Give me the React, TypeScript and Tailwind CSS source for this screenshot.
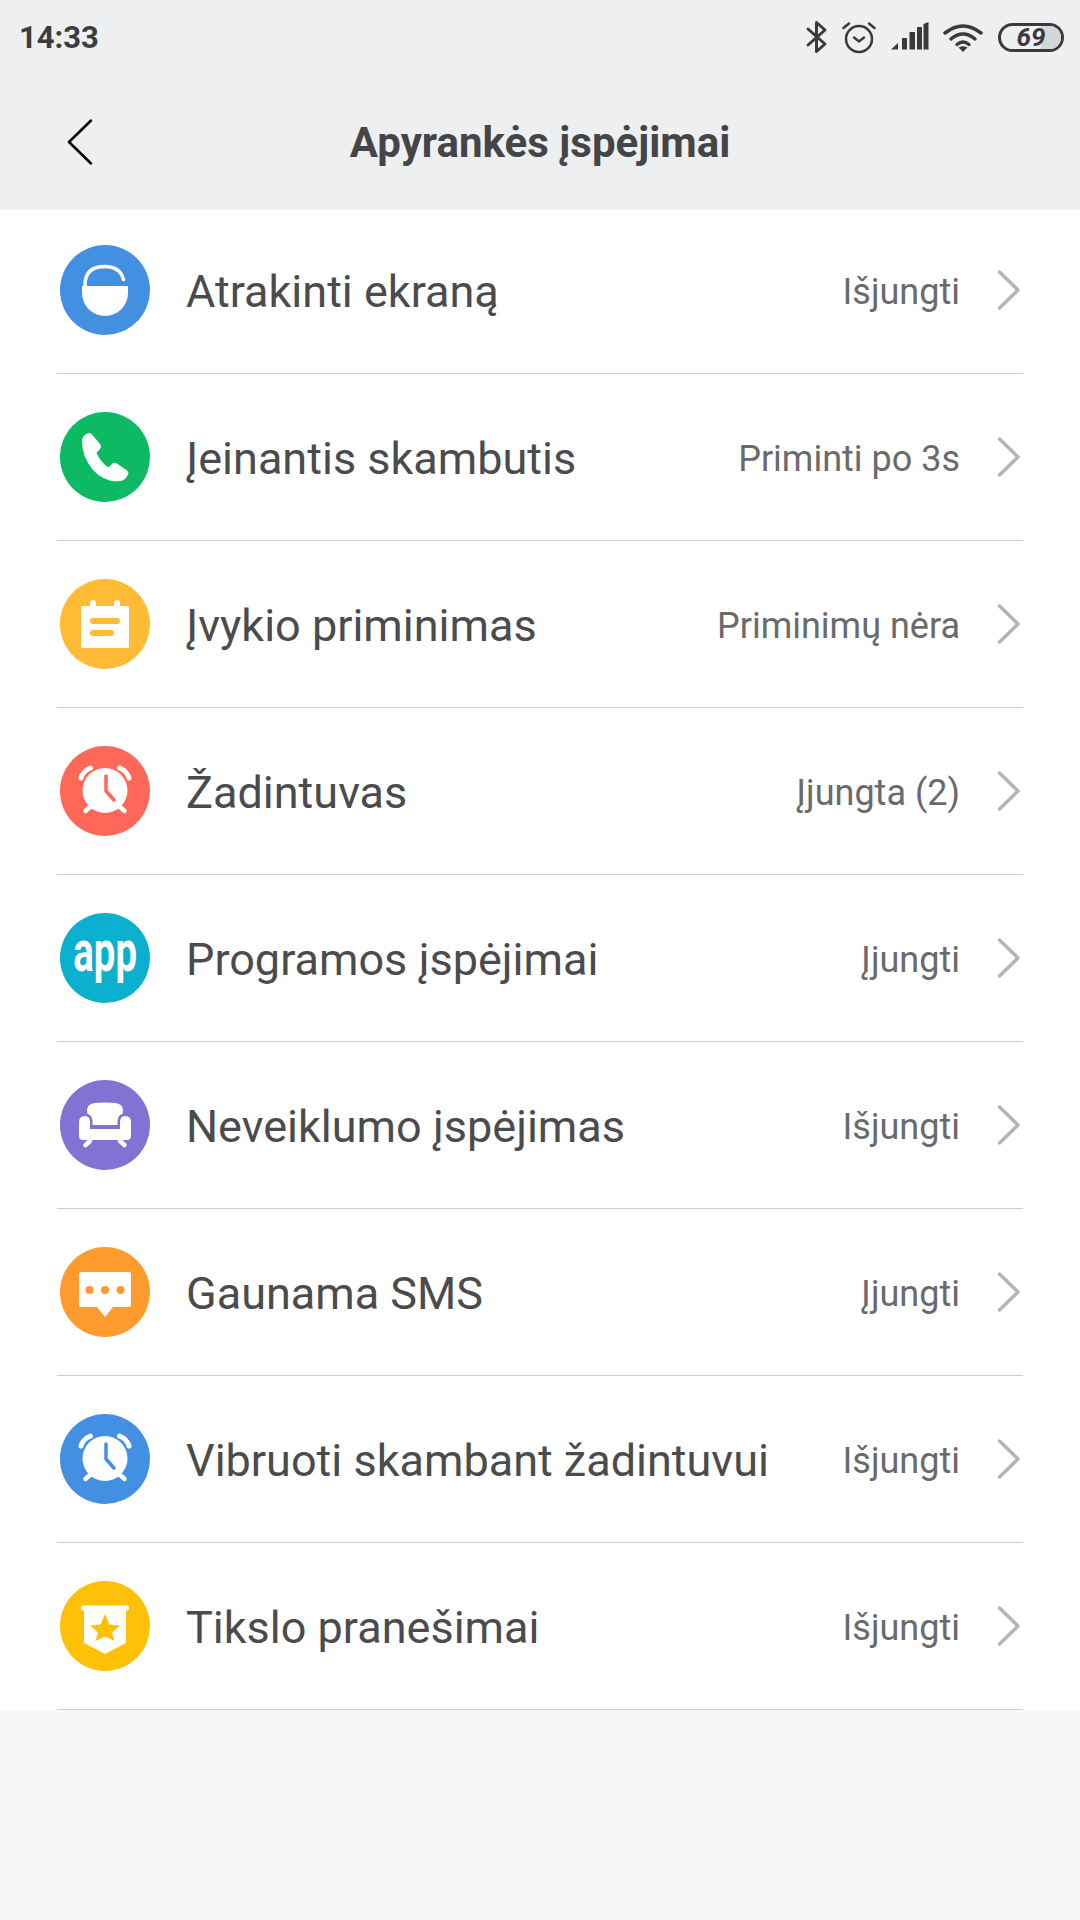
import React from "react";

const ClockIcon = ({ color }: { color: string }) => (
  <svg viewBox="0 0 90 90" className="w-[90px] h-[90px]">
    <path d="M21 32 Q23 25 30.500 22" stroke="#fff" strokeWidth="5" strokeLinecap="round" fill="none" />
    <path d="M69 32 Q67 25 59.500 22" stroke="#fff" strokeWidth="5" strokeLinecap="round" fill="none" />
    <path d="M31 60 L25.500 65 M59 60 L64.500 65" stroke="#fff" strokeWidth="4.500" strokeLinecap="round" fill="none" />
    <circle cx="45" cy="44.500" r="22.500" fill="#fff" />
    <path d="M46 30 L46 45 L54 54" stroke={color} strokeWidth="3.500" strokeLinecap="round" strokeLinejoin="round" fill="none" />
  </svg>
);

const icons: Record<string, React.ReactNode> = {
  lock: (
    <svg viewBox="0 0 90 90" className="w-[90px] h-[90px]">
      <path d="M22 41 H68 V48 A23 23 0 0 1 22 48 Z" fill="#fff" />
      <path d="M25 42 V40 Q25 21.500 45 21.500 Q60 21.500 63.500 34.500" stroke="#fff" strokeWidth="3.500" strokeLinecap="round" fill="none" />
    </svg>
  ),
  phone: (
    <svg viewBox="0 0 90 90" className="w-[90px] h-[90px]">
      <path
        d="M22 29 Q22 24 27 21.500 Q30 20 32 22.500 L40 32 Q42 34.500 40 37 L36.500 40.500 Q37.500 44 41 48.500 Q44.500 53 48.500 55.500 L52.500 51.500 Q54.500 50 57 51.500 L67 58.500 Q69 60.500 68 62.500 Q65.500 68.500 60 69 Q45 71 33 58 Q22 45 22 29 Z"
        fill="#fff"
      />
    </svg>
  ),
  cal: (
    <svg viewBox="0 0 90 90" className="w-[90px] h-[90px]">
      <rect x="21" y="27" width="48" height="42" rx="1.500" fill="#fff" />
      <rect x="30" y="21" width="6" height="10" rx="3" fill="#fff" />
      <rect x="54" y="21" width="6" height="10" rx="3" fill="#fff" />
      <rect x="30" y="39" width="30" height="6" rx="3" fill="#ffbb33" />
      <rect x="30" y="51" width="24" height="6" rx="3" fill="#ffbb33" />
    </svg>
  ),
  sofa: (
    <svg viewBox="0 0 90 90" className="w-[90px] h-[90px]">
      <path d="M27 30 Q27 24 35 23 Q45 22 55 23 Q63 24 63 30 L62.500 34 Q58 35 57.500 41 V45 H32.500 V41 Q32 35 27.500 34 Z" fill="#fff" />
      <path d="M19 42 Q19 36 25 36 Q30 36 30 42 V49 H60 V42 Q60 36 65 36 Q71 36 71 42 V56 Q71 60 67 60 H23 Q19 60 19 56 Z" fill="#fff" />
      <path d="M30 61 L25.500 65 M60 61 L64.500 65" stroke="#fff" strokeWidth="4.500" strokeLinecap="round" fill="none" />
    </svg>
  ),
  sms: (
    <svg viewBox="0 0 90 90" className="w-[90px] h-[90px]">
      <path d="M21 25 H69 Q71 25 71 27 V58 Q71 60 69 60 H53 L45 70 L37 60 H21 Q19 60 19 58 V27 Q19 25 21 25 Z" fill="#fff" />
      <circle cx="29.500" cy="43" r="4" fill="#ff9a2e" />
      <circle cx="45" cy="43" r="4" fill="#ff9a2e" />
      <circle cx="60.500" cy="43" r="4" fill="#ff9a2e" />
    </svg>
  ),
  goal: (
    <svg viewBox="0 0 90 90" className="w-[90px] h-[90px]">
      <rect x="21" y="24.500" width="48" height="5" rx="2" fill="#fff" />
      <path d="M24 28 H66 V62 L45 73 L24 62 Z" fill="#fff" />
      <path d="M45 33 L49.500 43.500 L60 44.500 L52 51.500 L54.500 60 L45 55.500 L35.500 60 L38 51.500 L30 44.500 L40.500 43.500 Z" fill="#ffc107" />
    </svg>
  ),
};

const rows = [
  { label: "Atrakinti ekraną", value: "Išjungti", color: "bg-[#4390e3]", icon: icons.lock },
  { label: "Įeinantis skambutis", value: "Priminti po 3s", color: "bg-[#0dba63]", icon: icons.phone },
  { label: "Įvykio priminimas", value: "Priminimų nėra", color: "bg-[#ffbb33]", icon: icons.cal },
  { label: "Žadintuvas", value: "Įjungta (2)", color: "bg-[#ff6759]", icon: <ClockIcon color="#ff6759" /> },
  {
    label: "Programos įspėjimai",
    value: "Įjungti",
    color: "bg-[#0cb0cf]",
    icon: (
      <span className="font-['Roboto',sans-serif] font-bold text-white text-[58px] leading-none scale-x-[0.66] -mt-[14px] block">
        app
      </span>
    ),
  },
  { label: "Neveiklumo įspėjimas", value: "Išjungti", color: "bg-[#8172d3]", icon: icons.sofa },
  { label: "Gaunama SMS", value: "Įjungti", color: "bg-[#ff9a2e]", icon: icons.sms },
  { label: "Vibruoti skambant žadintuvui", value: "Išjungti", color: "bg-[#4390e3]", icon: <ClockIcon color="#4390e3" /> },
  { label: "Tikslo pranešimai", value: "Išjungti", color: "bg-[#ffc107]", icon: icons.goal },
];

export default function App() {
  return (
    <div className="w-[1080px] h-[1920px] bg-[#f5f6f8] font-['Roboto',sans-serif] overflow-hidden">
      <div className="h-[210px] bg-[#eeeff1] flex flex-col">
        <div className="h-[74px] flex items-center justify-between pl-[19px] pr-[16px]">
          <span className="text-[31px] font-bold text-[#3c3c3e] leading-none">14:33</span>
          <div className="flex items-center">
            <svg viewBox="0 0 24 34" className="w-[24px] h-[34px] mr-[13px]">
              <path d="M3 9 L20 24 L11.500 31.500 V2.500 L20 10 L3 25" stroke="#3a3a3c" strokeWidth="3" fill="none" strokeLinejoin="round" strokeLinecap="round" />
            </svg>
            <svg viewBox="0 0 34 34" className="w-[34px] h-[34px] mr-[14px]">
              <circle cx="17" cy="19" r="13" stroke="#3a3a3c" strokeWidth="2.500" fill="none" />
              <path d="M12 17.500 L17 21.500 L22 17.500" stroke="#3a3a3c" strokeWidth="2.500" fill="none" strokeLinecap="round" />
              <path d="M1.500 8 L7 3.500 M32.500 8 L27 3.500" stroke="#3a3a3c" strokeWidth="2.500" fill="none" strokeLinecap="round" />
            </svg>
            <svg viewBox="0 0 39 30" className="w-[39px] h-[30px] mr-[14px]">
              <path d="M1 27.500 L8 21 V27.500 Z" fill="#3a3a3c" />
              <rect x="12" y="16" width="5" height="11.500" rx="0.500" fill="#3a3a3c" />
              <rect x="19.500" y="10" width="5.500" height="17.500" rx="0.500" fill="#3a3a3c" />
              <rect x="27" y="5" width="5" height="22.500" rx="0.500" fill="#3a3a3c" />
              <path d="M33.500 2 L38.500 0 V27.500 H33.500 Z" fill="#3a3a3c" />
            </svg>
            <svg viewBox="0 0 40 30" className="w-[40px] h-[30px] mr-[15px]">
              <path d="M2 11 Q20 -3 38 11" stroke="#3a3a3c" strokeWidth="3.500" fill="none" strokeLinecap="round" />
              <path d="M8 17 Q20 7 32 17" stroke="#3a3a3c" strokeWidth="3.500" fill="none" strokeLinecap="round" />
              <path d="M14 22.500 Q20 17.500 26 22.500" stroke="#3a3a3c" strokeWidth="3.500" fill="none" strokeLinecap="round" />
              <path d="M20 30 L15.500 25.500 Q20 23 24.500 25.500 Z" fill="#3a3a3c" />
            </svg>
            <div className="relative w-[66px] h-[29px] rounded-full border-[3px] border-[#3a3a3c] overflow-hidden flex items-center justify-center">
              <div className="absolute right-0 top-0 bottom-0 w-[20px] bg-[#d4d5d7]" />
              <span className="relative text-[26px] font-bold italic text-[#3a3a3c] leading-none">69</span>
            </div>
          </div>
        </div>
        <div className="relative h-[136px] flex items-start justify-center">
          <span className="text-[42px] font-bold text-[#454547] leading-none mt-[48px]">Apyrankės įspėjimai</span>
          <svg viewBox="0 0 26 46" className="absolute left-[67px] top-[45px] w-[26px] h-[46px]">
            <path d="M24 1.500 L2 23 L24 44.500" stroke="#000" strokeWidth="2.500" fill="none" strokeLinecap="round" strokeLinejoin="round" />
          </svg>
        </div>
      </div>
      <div className="bg-white h-[1500px] flex flex-col pl-[57px] pr-[57px]">
        {rows.map((r, i) => (
          <div
            key={r.label}
            className={`${i === 0 ? "h-[164px] pb-[3px]" : "h-[167px]"} shrink-0 border-b border-[#cfcfd1] flex items-center`}
          >
            <div className={`w-[90px] h-[90px] rounded-full ${r.color} ml-[3px] flex items-center justify-center shrink-0 overflow-hidden`}>
              {r.icon}
            </div>
            <span className="ml-[36px] mt-[3px] text-[45px] text-[#4b4b4d] leading-none whitespace-nowrap">{r.label}</span>
            <span className="ml-auto mt-[3px] mr-[1px] text-[36px] text-[#6a6a6c] leading-none whitespace-nowrap">{r.value}</span>
            <svg viewBox="0 0 24 40" className="ml-[36px] mr-[2px] -mt-[1px] w-[24px] h-[40px] shrink-0">
              <path d="M2.500 2 L21 20 L2.500 38" stroke="#b5b5b7" strokeWidth="3.500" fill="none" strokeLinecap="round" strokeLinejoin="round" />
            </svg>
          </div>
        ))}
      </div>
    </div>
  );
}
